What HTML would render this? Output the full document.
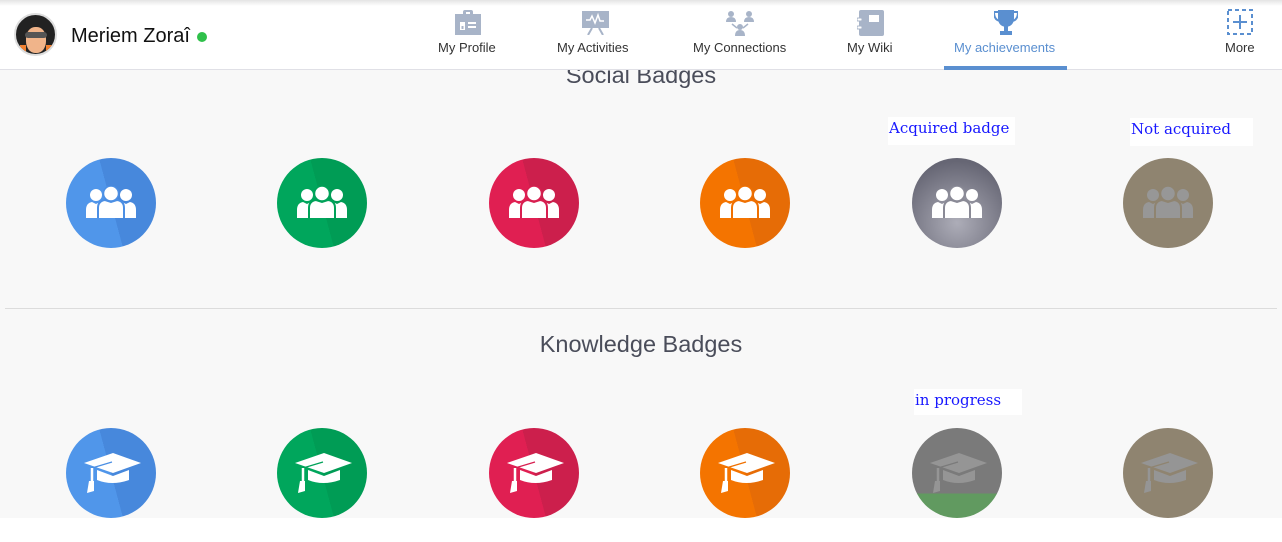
<!DOCTYPE html>
<html><head><meta charset="utf-8"><style>
*{margin:0;padding:0;box-sizing:border-box}
body{width:1282px;height:542px;overflow:hidden;background:#fff;font-family:"Liberation Sans",sans-serif;position:relative}
.page{position:absolute;left:0;top:70px;width:1282px;height:450px;background:#f8f8f8}
.hdr{position:absolute;left:0;top:0;width:1282px;height:70px;background:#fff;border-bottom:1px solid #e0e0e6;z-index:5}
.shadow{position:absolute;left:0;top:0;width:1282px;height:6px;background:linear-gradient(#e4e4e4,#fff);}
.nav{position:absolute;top:40px;font-size:13px;color:#333;text-align:center;white-space:nowrap}
.ni{position:absolute}
.circ{position:absolute;width:90px;height:90px;border-radius:50%;overflow:hidden;--fg:#fff}
.circ svg{position:absolute}
.lbl{position:absolute;background:#fff;font-family:"DejaVu Serif",serif;font-size:15px;color:#1818ff;padding:2px 0 0 1px}
h2{position:absolute;width:1282px;text-align:center;font-weight:normal;font-size:23.5px;color:#4a4d5a}
</style></head><body>
<svg width="0" height="0" style="position:absolute">
<defs>
<symbol id="ppl" viewBox="0 0 50 32">
<circle cx="10" cy="9" r="6" fill="var(--fg)"/><path d="M0 32V24Q0 17 6 16L10 18L14 16Q19 17 19 24V32Z" fill="var(--fg)"/>
<circle cx="40" cy="9" r="6" fill="var(--fg)"/><path d="M31 32V24Q31 17 36 16L40 18L44 16Q50 17 50 24V32Z" fill="var(--fg)"/>
<path d="M12 33V22Q12 15 19 14L25 16L31 14Q38 15 38 22V33Z" fill="var(--fg)" stroke="var(--bg)" stroke-width="2"/>
<circle cx="25" cy="7.5" r="7.5" fill="var(--fg)" stroke="var(--bg)" stroke-width="1.5"/>
</symbol>
<symbol id="cap" viewBox="0 0 58 40">
<path d="M14 17V27Q29 33 46 27V17L30 23Z" fill="var(--fg)"/>
<path d="M1 10L30 0L58 10L30 20Z" fill="var(--fg)"/>
<path d="M29 9L9 15V30" stroke="var(--bg)" stroke-width="1.2" fill="none"/>
<path d="M9 15V30" stroke="var(--fg)" stroke-width="2.5" fill="none"/>
<path d="M6 28L11 28L11 38L4 40Z" fill="var(--fg)"/>
</symbol>
</defs></svg>

<div class="page"></div>
<div style="position:absolute;left:0;top:518px;width:1282px;height:24px;background:#fff"></div>
<div style="position:absolute;left:5px;top:308px;width:1272px;height:1px;background:#dcdcdc"></div>

<h2 style="top:62px">Social Badges</h2>
<h2 style="top:331px">Knowledge Badges</h2>

<div class="hdr">
<div class="shadow"></div>
<div style="position:absolute;left:14px;top:13px;width:43px;height:43px;border-radius:50%;background:#222;border:2px solid #ddd;overflow:hidden">
<div style="position:absolute;left:10px;top:12px;width:20px;height:26px;border-radius:45%;background:#f0b48a"></div>
<div style="position:absolute;left:9px;top:17px;width:22px;height:6px;background:#555;border-radius:3px"></div>
<div style="position:absolute;left:4px;top:30px;width:6px;height:10px;background:#f08030"></div>
<div style="position:absolute;left:30px;top:30px;width:6px;height:10px;background:#f08030"></div>
</div>
<div style="position:absolute;left:71px;top:25px;font-size:20px;color:#111">Meriem Zoraî</div>
<div style="position:absolute;left:197px;top:32px;width:10px;height:10px;border-radius:50%;background:#2fc04a"></div>

<svg class="ni" style="left:455px;top:10px" width="26" height="25" viewBox="0 0 26 25"><rect x="0" y="4" width="26" height="21" fill="#a8b4c8"/><rect x="8" y="0" width="10" height="6" rx="2" fill="#a8b4c8"/><rect x="11" y="2" width="4" height="2" fill="#fff"/><rect x="5" y="12" width="5" height="8" fill="#fff"/><rect x="6.5" y="16" width="2" height="3" fill="#a8b4c8"/><rect x="13" y="12" width="8" height="2" fill="#fff"/><rect x="13" y="16" width="8" height="2" fill="#fff"/></svg>
<svg class="ni" style="left:582px;top:11px" width="27" height="24" viewBox="0 0 27 24"><rect x="0" y="0" width="27" height="17" fill="#a8b4c8"/><path d="M4 9H8L10 5L13 12L16 4L18 10H22" stroke="#fff" stroke-width="1.5" fill="none"/><path d="M10 17L6 24M17 17L21 24" stroke="#a8b4c8" stroke-width="2"/></svg>
<svg class="ni" style="left:726px;top:11px" width="28" height="25" viewBox="0 0 28 25"><circle cx="5" cy="3" r="3" fill="#a8b4c8"/><path d="M0 11Q0 6 5 6Q10 6 10 11Z" fill="#a8b4c8"/><circle cx="23" cy="3" r="3" fill="#a8b4c8"/><path d="M18 11Q18 6 23 6Q28 6 28 11Z" fill="#a8b4c8"/><circle cx="14" cy="16" r="3" fill="#a8b4c8"/><path d="M9 25Q9 19 14 19Q19 19 19 25Z" fill="#a8b4c8"/><path d="M6 13L11 17M22 13L17 17" stroke="#a8b4c8" stroke-width="1.5"/></svg>
<svg class="ni" style="left:857px;top:10px" width="27" height="26" viewBox="0 0 27 26"><rect x="2" y="0" width="25" height="26" rx="2" fill="#a8b4c8"/><rect x="12" y="5" width="10" height="7" fill="#fff"/><rect x="0" y="8" width="5" height="3" rx="1" fill="#fff" stroke="#a8b4c8"/><rect x="0" y="16" width="5" height="3" rx="1" fill="#fff" stroke="#a8b4c8"/></svg>
<svg class="ni" style="left:994px;top:10px" width="24" height="25" viewBox="0 0 24 25"><path d="M4 0H20V8Q20 16 12 17Q4 16 4 8Z" fill="#5a8fd0"/><path d="M4 2H0Q0 10 6 11M20 2H24Q24 10 18 11" stroke="#5a8fd0" stroke-width="2" fill="none"/><rect x="10" y="16" width="4" height="5" fill="#5a8fd0"/><rect x="6" y="21" width="12" height="4" fill="#5a8fd0"/></svg>
<svg class="ni" style="left:1227px;top:9px" width="26" height="26" viewBox="0 0 26 26"><rect x="1" y="1" width="24" height="24" fill="none" stroke="#5a8fd0" stroke-width="2" stroke-dasharray="4 3"/><path d="M13 6V20M6 13H20" stroke="#5a8fd0" stroke-width="2"/></svg>

<div class="nav" style="left:438px">My Profile</div>
<div class="nav" style="left:557px">My Activities</div>
<div class="nav" style="left:693px">My Connections</div>
<div class="nav" style="left:847px">My Wiki</div>
<div class="nav" style="left:954px;color:#5a8fd0">My achievements</div>
<div class="nav" style="left:1225px">More</div>
<div style="position:absolute;left:944px;top:66px;width:123px;height:4px;background:#5a8fd0"></div>
</div>

<!-- social badges -->
<div class="circ" style="left:66px;top:158px;background:linear-gradient(75deg,#5096ea 50%,#4788dc 50%);--bg:#4c8fe4"><svg style="left:20px;top:28px" width="50" height="32"><use href="#ppl"/></svg></div>
<div class="circ" style="left:277px;top:158px;background:linear-gradient(75deg,#00a65c 50%,#009c55 50%);--bg:#00a259"><svg style="left:20px;top:28px" width="50" height="32"><use href="#ppl"/></svg></div>
<div class="circ" style="left:489px;top:158px;background:linear-gradient(75deg,#e01f52 50%,#cc1f4c 50%);--bg:#d81f50"><svg style="left:20px;top:28px" width="50" height="32"><use href="#ppl"/></svg></div>
<div class="circ" style="left:700px;top:158px;background:linear-gradient(75deg,#f47400 50%,#e66c06 50%);--bg:#f07000"><svg style="left:20px;top:28px" width="50" height="32"><use href="#ppl"/></svg></div>
<div class="circ" style="left:912px;top:158px;background:radial-gradient(circle at 50% 72%,#adadb8,#666674 78%);--bg:#8a8a96"><svg style="left:20px;top:28px" width="50" height="32"><use href="#ppl"/></svg></div>
<div class="circ" style="left:1123px;top:158px;background:#8f8470;--bg:#8f8470;--fg:#979797"><svg style="left:20px;top:28px" width="50" height="32"><use href="#ppl"/></svg></div>

<!-- knowledge badges -->
<div class="circ" style="left:66px;top:428px;background:linear-gradient(75deg,#5096ea 50%,#4788dc 50%);--bg:#4c8fe4"><svg style="left:17px;top:25px" width="58" height="40"><use href="#cap"/></svg></div>
<div class="circ" style="left:277px;top:428px;background:linear-gradient(75deg,#00a65c 50%,#009c55 50%);--bg:#00a259"><svg style="left:17px;top:25px" width="58" height="40"><use href="#cap"/></svg></div>
<div class="circ" style="left:489px;top:428px;background:linear-gradient(75deg,#e01f52 50%,#cc1f4c 50%);--bg:#d81f50"><svg style="left:17px;top:25px" width="58" height="40"><use href="#cap"/></svg></div>
<div class="circ" style="left:700px;top:428px;background:linear-gradient(75deg,#f47400 50%,#e66c06 50%);--bg:#f07000"><svg style="left:17px;top:25px" width="58" height="40"><use href="#cap"/></svg></div>
<div class="circ" style="left:912px;top:428px;background:linear-gradient(#7a7a7a 73%,#619a60 73%);--bg:#7a7a7a;--fg:#959595"><svg style="left:17px;top:25px" width="58" height="40"><use href="#cap"/></svg></div>
<div class="circ" style="left:1123px;top:428px;background:#8f8470;--bg:#8f8470;--fg:#959595"><svg style="left:17px;top:25px" width="58" height="40"><use href="#cap"/></svg></div>

<div class="lbl" style="left:888px;top:117px;width:127px;height:28px">Acquired badge</div>
<div class="lbl" style="left:1130px;top:118px;width:123px;height:28px">Not acquired</div>
<div class="lbl" style="left:914px;top:389px;width:108px;height:26px">in progress</div>
</body></html>
